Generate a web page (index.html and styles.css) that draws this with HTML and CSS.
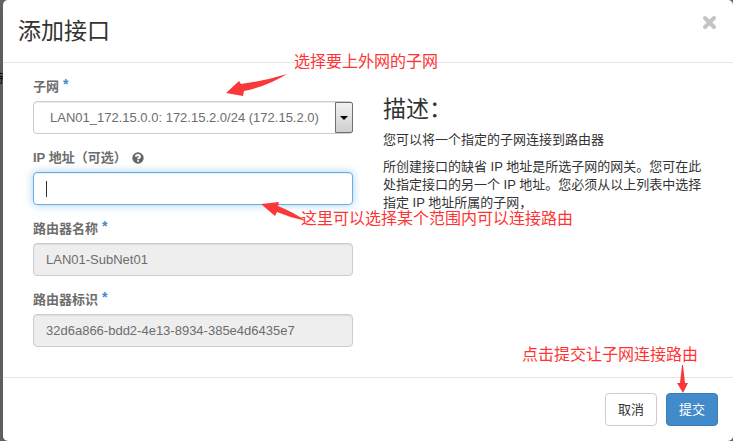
FILE: index.html
```html
<!DOCTYPE html>

<html lang="zh-CN">
	<head>
		<meta charset="UTF-8" />
		<title>添加接口</title>
		<link rel="stylesheet" href="styles.css">
	</head>
	<body>
		<div class="backdrop-text">持</div>
		<form class="modal">
			<div class="modal-header">
				<h3>添加接口</h3>
				<button type="button" class="close" aria-label="关闭">
					<svg width="16" height="16" viewBox="0 0 16 16"><path d="M3 3L12 12M12 3L3 12" /></svg>
				</button>
			</div>
			<div class="modal-body">
				<div class="column">
					<div class="form-group">
						<label for="subnet">子网<span class="required">*</span></label>
						<div class="field">
							<select id="subnet" class="form-control">
								<option>LAN01_172.15.0.0: 172.15.2.0/24 (172.15.2.0)</option>
							</select>
							<span class="select-arrow"></span>
						</div>
					</div>
					<div class="form-group">
						<label for="ip">IP 地址（可选）<svg class="help" width="12" height="12" viewBox="0 0 12 12"><circle cx="6" cy="6" r="5.7" /><path d="M4 4.7C4 2.4 8 2.4 8 4.6C8 5.9 6.1 5.8 6.1 7.3" /><rect x="5.2" y="8.2" width="1.8" height="1.6" /></svg></label>
						<div class="field">
							<input id="ip" type="text" class="form-control focused" />
							<span class="caret"></span>
						</div>
					</div>
					<div class="form-group">
						<label for="router-name">路由器名称<span class="required">*</span></label>
						<input id="router-name" type="text" class="form-control" value="LAN01-SubNet01" readonly />
					</div>
					<div class="form-group">
						<label for="router-id">路由器标识<span class="required">*</span></label>
						<input id="router-id" type="text" class="form-control" value="32d6a866-bdd2-4e13-8934-385e4d6435e7" readonly />
					</div>
				</div>
				<div class="column description">
					<h3>描述：</h3>
					<p>您可以将一个指定的子网连接到路由器</p>
					<p>所创建接口的缺省 IP 地址是所选子网的网关。您可在此处指定接口的另一个 IP 地址。您必须从以上列表中选择指定 IP 地址所属的子网，</p>
				</div>
			</div>
			<div class="modal-footer">
				<button type="button" class="btn">取消</button>
				<button type="submit" class="btn btn-primary">提交</button>
			</div>
		</form>

		<!-- notes laid over the dialog -->
		<div class="note note-subnet">选择要上外网的子网</div>
		<div class="note note-ip">这里可以选择某个范围内可以连接路由</div>
		<div class="note note-submit">点击提交让子网连接路由</div>
		<svg class="arrow arrow-subnet" width="62" height="24" viewBox="0 0 62 24"><path d="M0 19L13 7L15 10Q38 7 61 0Q42 12 18 17L17 22Z" /></svg>
		<svg class="arrow arrow-ip" width="46" height="20" viewBox="0 0 46 20"><path d="M0 2L18 0L17 4Q32 10 45 19Q30 16 16 10L14 14Z" /></svg>
		<svg class="arrow arrow-submit" width="12" height="28" viewBox="0 0 12 28"><path d="M5 0H6L8 18L11 18L6 28L0 18L3 18Z" /></svg>
	</body>
</html>
```

FILE: styles.css
```css
* {
	box-sizing: border-box;
}
body {
	position: relative;
	margin: 0;
	padding-left: 3px;
	background-color: #666;
	color: #333;
	font-family: "Liberation Sans", "Noto Sans CJK SC", sans-serif;
	font-size: 13px;
	line-height: 18px;
}
h3 {
	margin: 0;
	font-size: 23px;
	font-weight: normal;
	line-height: 26px;
}
p {
	margin: 0 0 9px;
}
.backdrop-text {
	position: absolute;
	left: -9px;
	top: 69px;
	color: #111;
}
.modal {
	position: relative;
	background-color: #fff;
	border-radius: 5px;
	box-shadow: 0 5px 15px rgba(0, 0, 0, 0.2);
}
.modal-header {
	display: flex;
	justify-content: space-between;
	align-items: flex-start;
	padding: 15px;
	border-bottom: 1px solid #e5e5e5;
}
.modal-header h3 {
	line-height: 32px;
}
.close {
	display: flex;
	padding: 0;
	border: 0;
	background: none;
}
.close path {
	stroke: #c4c4c4;
	stroke-width: 4;
	stroke-linecap: round;
}
.modal-body {
	display: flex;
	padding: 15px;
}
.column {
	flex: 1;
	min-width: 0;
	padding: 0 15px;
}
.description {
	padding-top: 18px;
}
.description h3 {
	margin-bottom: 9px;
}
.form-group {
	margin-bottom: 15px;
}
.form-group label {
	display: flex;
	align-items: center;
	height: 18px;
	margin-bottom: 5px;
	color: #6d6d6d;
	font-weight: bold;
}
.required {
	align-self: flex-start;
	margin-left: 4px;
	color: #428bca;
	font-size: 14px;
	line-height: 12px;
}
.help {
	margin-left: 5px;
	fill: #666;
}
.help path {
	fill: none;
	stroke: #fff;
	stroke-width: 2;
}
.help rect {
	fill: #fff;
}
.field {
	position: relative;
}
.form-control {
	display: block;
	width: 100%;
	height: 33px;
	padding: 6px 12px;
	border: 1px solid #ccc;
	border-radius: 4px;
	background-color: #fff;
	box-shadow: inset 0 1px 1px rgba(0, 0, 0, 0.075);
	color: #6d6d6d;
	font: inherit;
	appearance: none;
	outline: 0;
}
select.form-control {
	padding-left: 16px;
}
.form-control[readonly] {
	background-color: #eee;
}
.form-control.focused {
	border-color: #66afe9;
	box-shadow: inset 0 1px 1px rgba(0, 0, 0, 0.075), 0 0 8px rgba(102, 175, 233, 0.6);
}
.select-arrow {
	position: absolute;
	top: 1px;
	right: 0;
	bottom: 1px;
	display: flex;
	align-items: center;
	justify-content: center;
	width: 18px;
	border: 1px solid #707070;
	border-radius: 0 2px 2px 0;
	background: linear-gradient(#f2f2f2, #cfcfcf);
	pointer-events: none;
}
.select-arrow::after {
	content: "";
	border: 4px solid transparent;
	border-top-color: #000;
	border-bottom: 0;
}
.caret {
	position: absolute;
	left: 13px;
	top: 9px;
	width: 1px;
	height: 16px;
	background-color: #333;
}
.modal-footer {
	display: flex;
	justify-content: flex-end;
	gap: 9px;
	padding: 15px;
	border-top: 1px solid #e5e5e5;
}
.btn {
	height: 33px;
	padding: 0 12px;
	border: 1px solid #ccc;
	border-radius: 4px;
	background-color: #fff;
	color: #333;
	font: inherit;
}
.btn-primary {
	border-color: #357ebd;
	background-color: #428bca;
	color: #fff;
}
.note {
	position: absolute;
	color: #f33;
	font-size: 16px;
	line-height: 20px;
	white-space: nowrap;
}
.note-subnet {
	left: 294px;
	top: 52px;
}
.note-ip {
	left: 301px;
	top: 209px;
}
.note-submit {
	left: 522px;
	top: 345px;
}
.arrow {
	position: absolute;
	fill: #f93939;
}
.arrow-subnet {
	left: 226px;
	top: 74px;
}
.arrow-ip {
	left: 261px;
	top: 202px;
}
.arrow-submit {
	left: 677px;
	top: 365px;
}
```
